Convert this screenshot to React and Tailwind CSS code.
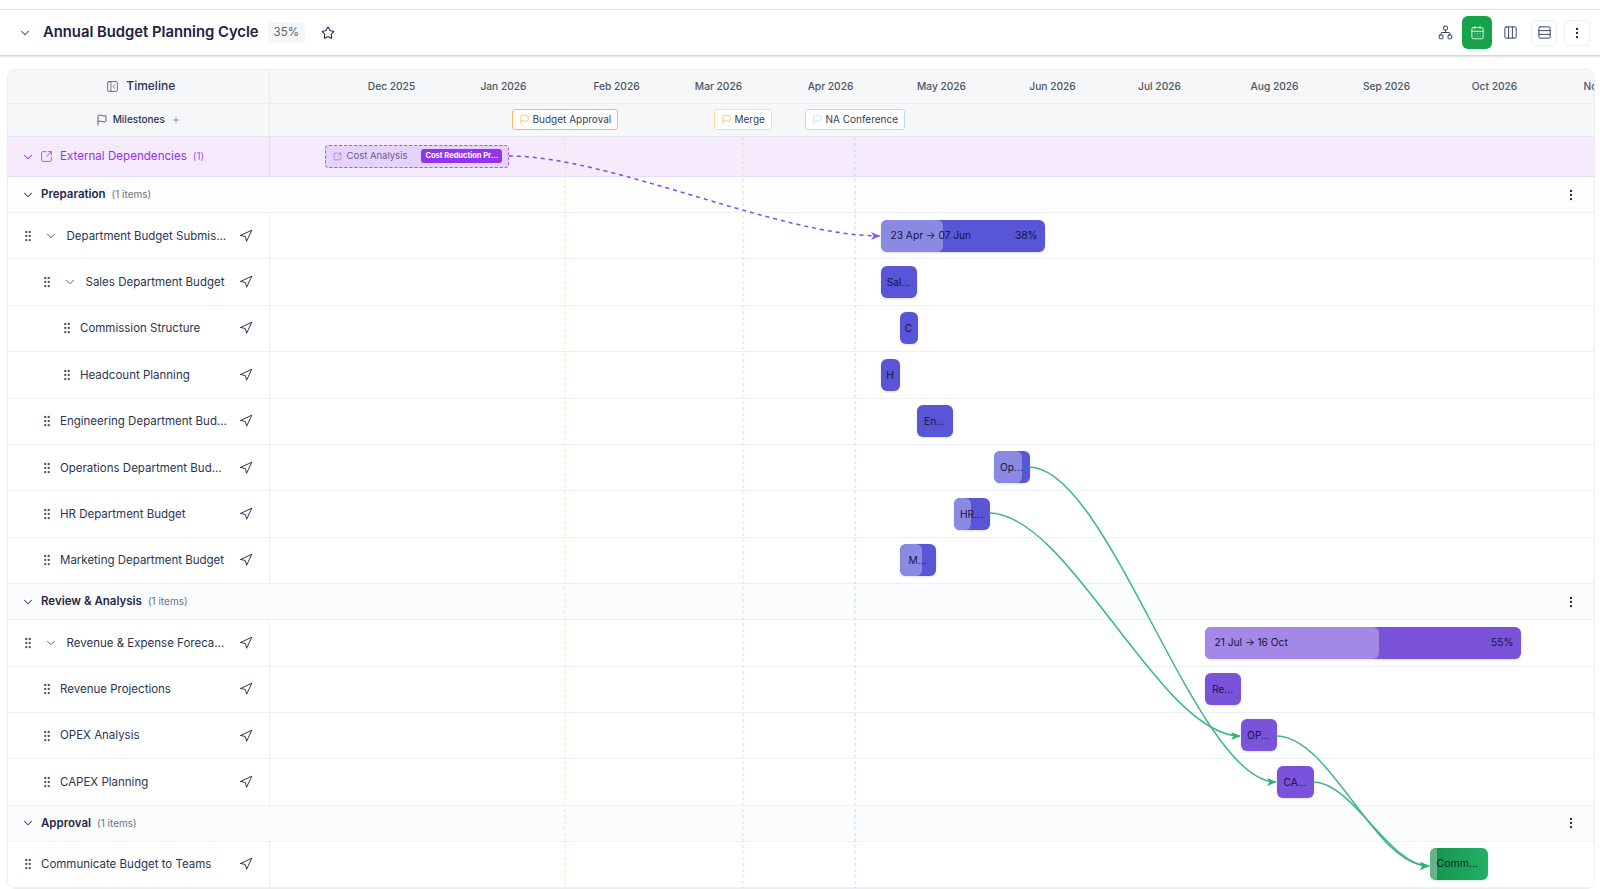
import React from 'react'
import { CalendarDays, ChevronDown, Columns3, EllipsisVertical, Flag, GripVertical, Navigation, Network, PanelLeftClose, Plus, Rows3, SquareArrowOutUpRight, Star } from 'lucide-react'

const months = [
  { label: 'Dec 2025', pos: 'left-[122px]' },
  { label: 'Jan 2026', pos: 'left-[234px]' },
  { label: 'Feb 2026', pos: 'left-[347px]' },
  { label: 'Mar 2026', pos: 'left-[449px]' },
  { label: 'Apr 2026', pos: 'left-[561px]' },
  { label: 'May 2026', pos: 'left-[672px]' },
  { label: 'Jun 2026', pos: 'left-[783px]' },
  { label: 'Jul 2026', pos: 'left-[890px]' },
  { label: 'Aug 2026', pos: 'left-[1005px]' },
  { label: 'Sep 2026', pos: 'left-[1117px]' },
  { label: 'Oct 2026', pos: 'left-[1225px]' },
  { label: 'Nov 2026', pos: 'left-[1338px]' },
]

const milestones = [
  { label: 'Budget Approval', pos: 'left-[242px]', box: 'border-orange-300', flag: 'text-orange-300' },
  { label: 'Merge', pos: 'left-[444px]', box: 'border-orange-200', flag: 'text-orange-300' },
  { label: 'NA Conference', pos: 'left-[535px]', box: 'border-blue-200', flag: 'text-blue-200' },
]

const indigo = { base: 'bg-[#5856d6]', light: 'bg-[#8b8ae3]' }
const violet = { base: 'bg-[#7a53da]', light: 'bg-[#a488e8]' }

const sections = [
  {
    name: 'Preparation',
    tint: 'bg-[#fdfdfe]',
    rows: [
      { label: 'Department Budget Submis...', pad: 'pl-[13px]', chevron: 'ml-[9px] mr-[8.5px]', bar: { pos: 'left-[611px] w-[164px]', color: indigo, fill: 'w-[62px]', dates: '23 Apr → 07 Jun', pct: '38%' } },
      { label: 'Sales Department Budget', pad: 'pl-[32px]', chevron: 'ml-[9px] mr-[8.5px]', bar: { pos: 'left-[611px] w-[36px]', color: indigo, text: 'Sal...' } },
      { label: 'Commission Structure', pad: 'pl-[52px]', bar: { pos: 'left-[630px] w-[18px]', color: indigo, text: 'C' } },
      { label: 'Headcount Planning', pad: 'pl-[52px]', bar: { pos: 'left-[611px] w-[19px]', color: indigo, text: 'H' } },
      { label: 'Engineering Department Bud...', pad: 'pl-[32px]', bar: { pos: 'left-[647px] w-[36px]', color: indigo, text: 'En...' } },
      { label: 'Operations Department Bud...', pad: 'pl-[32px]', bar: { pos: 'left-[724px] w-[36px]', color: indigo, fill: 'w-[28px]', text: 'Op...' } },
      { label: 'HR Department Budget', pad: 'pl-[32px]', bar: { pos: 'left-[684px] w-[36px]', color: indigo, fill: 'w-[17px]', text: 'HR...' } },
      { label: 'Marketing Department Budget', pad: 'pl-[32px]', bar: { pos: 'left-[630px] w-[36px]', color: indigo, fill: 'w-[22px]', text: 'M...' } },
    ],
  },
  {
    name: 'Review & Analysis',
    tint: 'bg-[#fbfcfd]',
    rows: [
      { label: 'Revenue & Expense Foreca...', pad: 'pl-[13px]', chevron: 'ml-[9px] mr-[8.5px]', bar: { pos: 'left-[935px] w-[316px]', color: violet, fill: 'w-[174px]', dates: '21 Jul → 16 Oct', pct: '55%' } },
      { label: 'Revenue Projections', pad: 'pl-[32px]', bar: { pos: 'left-[935px] w-[36px]', color: violet, text: 'Re...' } },
      { label: 'OPEX Analysis', pad: 'pl-[32px]', bar: { pos: 'left-[971px] w-[36px]', color: violet, text: 'OP...' } },
      { label: 'CAPEX Planning', pad: 'pl-[32px]', bar: { pos: 'left-[1007px] w-[37px]', color: violet, text: 'CA...' } },
    ],
  },
  {
    name: 'Approval',
    tint: 'bg-[#fbfcfd]',
    rows: [
      { label: 'Communicate Budget to Teams', pad: 'pl-[13px]', bar: { pos: 'left-[1160px] w-[58px]', green: true, text: 'Comm...' } },
    ],
  },
]

const Bar = ({ bar }) => {
  if (bar.green) {
    return (
      <div className={`absolute top-[6.5px] h-[32px] ${bar.pos} rounded-[6px] overflow-hidden bg-gradient-to-r from-[#15924a] to-[#22b066] shadow-sm flex items-center`}>
        <div className="absolute left-0 top-0 bottom-0 w-[7px] bg-[#63b587]" />
        <span className="relative pl-[7px] text-[10.5px] text-[#0c1f33]">{bar.text}</span>
      </div>
    )
  }
  return (
    <div className={`absolute top-[6.5px] h-[32px] ${bar.pos} ${bar.color.base} rounded-[6px] overflow-hidden shadow-sm flex items-center text-[10.2px] text-[#16143f]`}>
      {bar.fill && <div className={`absolute left-0 top-0 bottom-0 ${bar.fill} ${bar.color.light} rounded-[6px]`} />}
      {bar.dates ? (
        <div className="relative flex flex-1 items-center justify-between pl-[10px] pr-[7px]">
          <span>{bar.dates}</span>
          <span>{bar.pct}</span>
        </div>
      ) : (
        <span className="relative w-full text-center leading-none">{bar.text}</span>
      )}
    </div>
  )
}

const TaskRow = ({ row }) => (
  <div className="flex h-[46.4px] border-b border-[#eef0f4]">
    <div className={`flex w-[261.5px] shrink-0 items-center border-r border-[#eceef2] ${row.pad} pr-[16px]`}>
      <GripVertical size={14} strokeWidth={2} className="shrink-0 text-[#4b5563]" />
      {row.chevron ? (
        <ChevronDown size={14} strokeWidth={1.6} className={`shrink-0 text-[#4b5563] ${row.chevron}`} />
      ) : (
        <span className="w-[6px] shrink-0" />
      )}
      <span className="mt-[1px] flex-1 whitespace-nowrap text-[11.5px] text-[#2b3550]">{row.label}</span>
      <Navigation size={14} strokeWidth={1.6} className="shrink-0 text-[#1f2a44]" />
    </div>
    <div className="relative flex-1">
      <Bar bar={row.bar} />
    </div>
  </div>
)

const Section = ({ section }) => (
  <div>
    <div className={`flex h-[36px] items-center border-b border-[#eef0f4] ${section.tint} pl-[13px] pr-[16px]`}>
      <ChevronDown size={14} strokeWidth={1.8} className="text-[#374151]" />
      <span className="ml-[6px] text-[11.5px] font-semibold text-[#1f2a44]">{section.name}</span>
      <span className="ml-[6px] text-[10px] text-[#6b7280]">(1 items)</span>
      <EllipsisVertical size={14} strokeWidth={2} className="ml-auto text-[#1f2937]" />
    </div>
    {section.rows.map((row) => (
      <TaskRow key={row.label} row={row} />
    ))}
  </div>
)

const App = () => {
  return (
    <div className="relative h-[889px] w-[1600px] overflow-hidden bg-white font-['Inter',sans-serif]">
      {/* Top bar */}
      <div className="h-[10px] border-b border-[#e9ebf0] bg-white" />
      <div className="flex h-[45px] items-center justify-between bg-white pl-[18px] pr-[10px] shadow-[0_1px_3px_rgba(0,0,0,0.25)]">
        <div className="flex items-center">
          <ChevronDown size={14} strokeWidth={1.8} className="text-[#374151]" />
          <h1 className="ml-[11px] text-[14.8px] font-semibold text-[#1a2340]">Annual Budget Planning Cycle</h1>
          <span className="ml-[9px] rounded-[4px] bg-[#f5f6f8] px-[6px] py-[2px] text-[11.5px] text-[#5b6472]">35%</span>
          <Star size={14} strokeWidth={1.8} className="ml-[16px] text-[#1f2a44]" />
        </div>
        <div className="flex items-center">
          <Network size={15} strokeWidth={1.6} className="mr-[9px] text-[#3b4663]" />
          <div className="flex h-[33px] w-[30px] items-center justify-center rounded-[6px] bg-[#16a34a]">
            <CalendarDays size={15} strokeWidth={1.6} className="text-white/85" />
          </div>
          <div className="flex w-[37px] justify-center">
            <Columns3 size={15} strokeWidth={1.6} className="text-[#3b4663]" />
          </div>
          <div className="ml-[2px] flex h-[26px] w-[26px] items-center justify-center rounded-[5px] border border-[#eceef2]">
            <Rows3 size={15} strokeWidth={1.6} className="text-[#3b4663]" />
          </div>
          <div className="ml-[7px] flex h-[26px] w-[26px] items-center justify-center rounded-[5px] border border-[#eceef2]">
            <EllipsisVertical size={14} strokeWidth={2} className="text-[#1f2937]" />
          </div>
        </div>
      </div>

      {/* Gantt card */}
      <div className="ml-[7px] mt-[14px] w-[1588px] overflow-hidden rounded-[8px] border border-[#eceef2]">
        <div className="flex h-[33.5px] border-b border-[#eceef2] bg-[#f6f7f9]">
          <div className="flex w-[261.5px] shrink-0 items-center justify-center border-r border-[#eceef2] pl-[5px]">
            <PanelLeftClose size={13} strokeWidth={1.5} className="text-[#4b5563]" />
            <span className="ml-[7px] text-[12px] font-medium text-[#2b3550]">Timeline</span>
          </div>
          <div className="relative flex-1">
            {months.map((m) => (
              <span key={m.label} className={`absolute top-[9px] -translate-x-1/2 whitespace-nowrap text-[10.2px] font-medium text-[#4b5563] ${m.pos}`}>{m.label}</span>
            ))}
          </div>
        </div>
        <div className="flex h-[33.5px] border-b border-[#e4e7ec] bg-[#f6f7f9]">
          <div className="flex w-[261.5px] shrink-0 items-center justify-center border-r border-[#eceef2]">
            <Flag size={12} strokeWidth={1.6} className="text-[#374151]" />
            <span className="ml-[5px] text-[10px] font-medium text-[#2b3550]">Milestones</span>
            <Plus size={10} strokeWidth={1.6} className="ml-[6px] text-[#6b7280]" />
          </div>
          <div className="relative flex-1">
            {milestones.map((m) => (
              <div key={m.label} className={`absolute top-[5.5px] flex h-[21px] items-center rounded-[3px] border bg-white px-[6px] ${m.pos} ${m.box}`}>
                <Flag size={11} strokeWidth={1.8} className={m.flag} />
                <span className="ml-[3px] whitespace-nowrap text-[10px] text-[#374151]">{m.label}</span>
              </div>
            ))}
          </div>
        </div>
        <div className="flex h-[40px] border-b border-[#eadcf8] bg-[#f6ebfd]">
          <div className="flex w-[261.5px] shrink-0 items-center border-r border-[#e4d4f5] pl-[13px]">
            <ChevronDown size={14} strokeWidth={1.8} className="text-[#9333ea]" />
            <SquareArrowOutUpRight size={13} strokeWidth={1.8} className="ml-[5px] text-[#a855f7]" />
            <span className="ml-[7px] text-[11.6px] text-[#9333ea]">External Dependencies</span>
            <span className="ml-[6px] text-[10px] text-[#a855f7]">(1)</span>
          </div>
          <div className="relative flex-1">
            <div className="absolute left-[55px] top-[7.5px] flex h-[23px] w-[184px] items-center rounded-[4px] border-[1.5px] border-dashed border-[#a855f7] bg-[#e6d3fb] pl-[7px]">
              <SquareArrowOutUpRight size={9} strokeWidth={1.8} className="shrink-0 text-[#a855f7]" />
              <span className="ml-[5px] whitespace-nowrap text-[9.5px] text-[#6b5b8a]">Cost Analysis</span>
              <span className="ml-[14px] whitespace-nowrap rounded-[3px] bg-[#9333ea] px-[4px] py-[1px] text-[7.5px] font-bold text-white">Cost Reduction Pr...</span>
            </div>
          </div>
        </div>
        {sections.map((section) => (
          <Section key={section.name} section={section} />
        ))}
      </div>

      {/* Dependency arrows and milestone guides over the chart */}
      <svg className="pointer-events-none absolute left-0 top-0" width="1600" height="889" fill="none">
        <defs>
          <marker id="arrowGreen" markerWidth="10" markerHeight="10" refX="9" refY="5" orient="auto" markerUnits="userSpaceOnUse">
            <path d="M0 1 L9.5 5 L0 9 L2.5 5 Z" fill="#22b573" />
          </marker>
          <marker id="arrowViolet" markerWidth="10" markerHeight="10" refX="9" refY="5" orient="auto" markerUnits="userSpaceOnUse">
            <path d="M0 1 L9.5 5 L0 9 L2.5 5 Z" fill="#8b5cf6" />
          </marker>
        </defs>
        <line x1="565" y1="137" x2="565" y2="888" stroke="#fde68a" strokeDasharray="3 3" />
        <line x1="743" y1="137" x2="743" y2="888" stroke="#fed7aa" strokeDasharray="3 3" />
        <line x1="855" y1="137" x2="855" y2="888" stroke="#bfdbfe" strokeDasharray="3 3" />
        <path d="M509 156 C 609 156, 780 236, 880 236" stroke="#7c4fe0" strokeWidth="1.5" strokeDasharray="4 4" markerEnd="url(#arrowViolet)" />
        <path d="M1029 467 C 1109 467, 1196 782, 1276 782" stroke="#3cb885" strokeWidth="1.5" markerEnd="url(#arrowGreen)" />
        <path d="M989 513 C 1069 513, 1160 736, 1240 736" stroke="#3cb885" strokeWidth="1.5" markerEnd="url(#arrowGreen)" />
        <path d="M1276 736 C 1331 736, 1374 866, 1429 866" stroke="#3cb885" strokeWidth="1.5" markerEnd="url(#arrowGreen)" />
        <path d="M1313 782 C 1353 782, 1389 866, 1429 866" stroke="#3cb885" strokeWidth="1.5" markerEnd="url(#arrowGreen)" />
      </svg>
    </div>
  )
}

export default App
